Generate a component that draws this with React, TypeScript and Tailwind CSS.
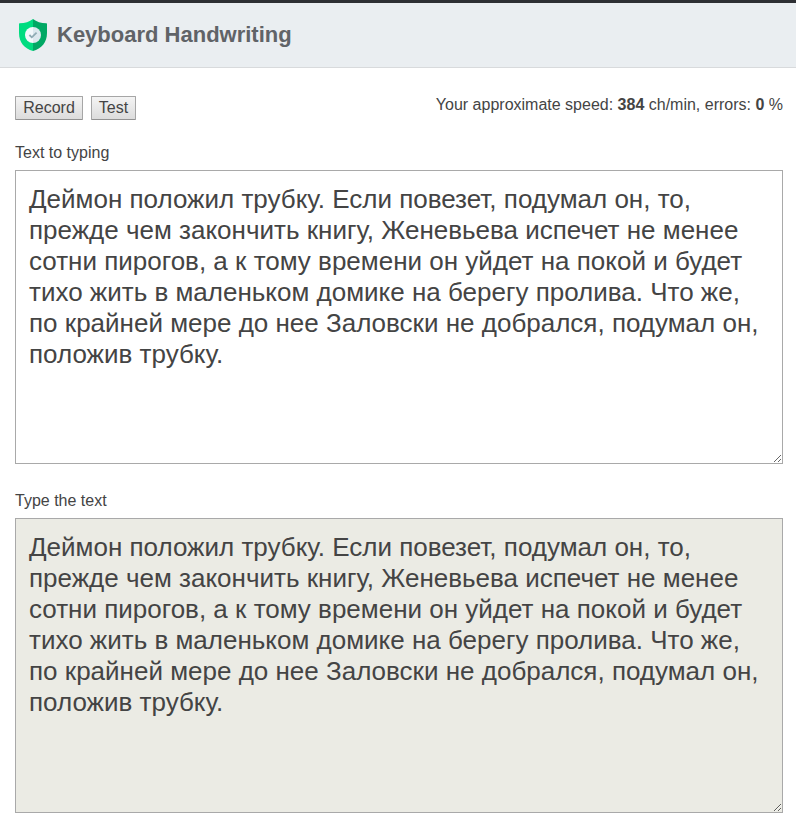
import React from "react";

const sample =
  "Деймон положил трубку. Если повезет, подумал он, то, прежде чем закончить книгу, Женевьева испечет не менее сотни пирогов, а к тому времени он уйдет на покой и будет тихо жить в маленьком домике на берегу пролива. Что же, по крайней мере до нее Заловски не добрался, подумал он, положив трубку.";

function Shield() {
  return (
    <svg className="h-8 w-7" viewBox="0 0 28 32">
      <path d="M14 0 C10.5 2.8 6 4.2 .6 4.2 Q0 4.2 0 5 V14 C0 23.5 5.5 29.5 14 32 Z" fill="#00dc80" />
      <path d="M14 0 C17.5 2.8 22 4.2 27.4 4.2 Q28 4.2 28 5 V14 C28 23.5 22.5 29.5 14 32 Z" fill="#00a864" />
      <path d="M14 8 A8 8 0 0 0 14 24 Z" fill="#f2f8fb" />
      <path d="M14 8 A8 8 0 0 1 14 24 Z" fill="#dce8ee" />
      <path d="M10.4 16 L12.8 18.3 L17.6 13.6" fill="none" stroke="#8fabb4" strokeWidth="1.8" />
    </svg>
  );
}

function ActionButton({ label, className }: { label: string; className: string }) {
  return (
    <button
      className={`h-6 rounded-[1px] border border-[#a6a6a6] border-b-[#929292] bg-linear-to-b from-[#f4f4f4] to-[#dcdcdc] text-base leading-5 ${className}`}
    >
      {label}
    </button>
  );
}

function Field({ label, className }: { label: string; className: string }) {
  return (
    <section>
      <label className="block h-[25px] text-base leading-4">{label}</label>
      <textarea
        readOnly
        spellCheck={false}
        defaultValue={sample}
        className={`block w-[768px] resize border border-[#a9a9a9] px-[13px] py-[13px] text-[26px] leading-[31px] outline-none ${className}`}
      />
    </section>
  );
}

export default function App() {
  return (
    <div className="h-[837px] overflow-hidden bg-white font-['Liberation_Sans',Arial,sans-serif] text-[#444444]">
      <header className="flex h-[68px] items-center border-t-[3px] border-b border-t-[#2d2f33] border-b-[#d8dadc] bg-[#eaeef1] pl-[19px]">
        <Shield />
        <h1 className="ml-[10px] text-[22px] leading-8 font-bold text-[#606367]">Keyboard Handwriting</h1>
      </header>
      <main className="pl-[15px]">
        <div className="flex h-[77px] w-[768px] items-start justify-between pt-7">
          <div className="flex gap-2">
            <ActionButton label="Record" className="w-[68px]" />
            <ActionButton label="Test" className="w-[45px]" />
          </div>
          <p className="text-base leading-[18px]">
            Your approximate speed: <b>384</b> ch/min, errors: <b>0</b> %
          </p>
        </div>
        <div className="flex flex-col gap-[29px]">
          <Field label="Text to typing" className="h-[294px] bg-white" />
          <Field label="Type the text" className="h-[295px] bg-[#ebebe4]" />
        </div>
      </main>
    </div>
  );
}
